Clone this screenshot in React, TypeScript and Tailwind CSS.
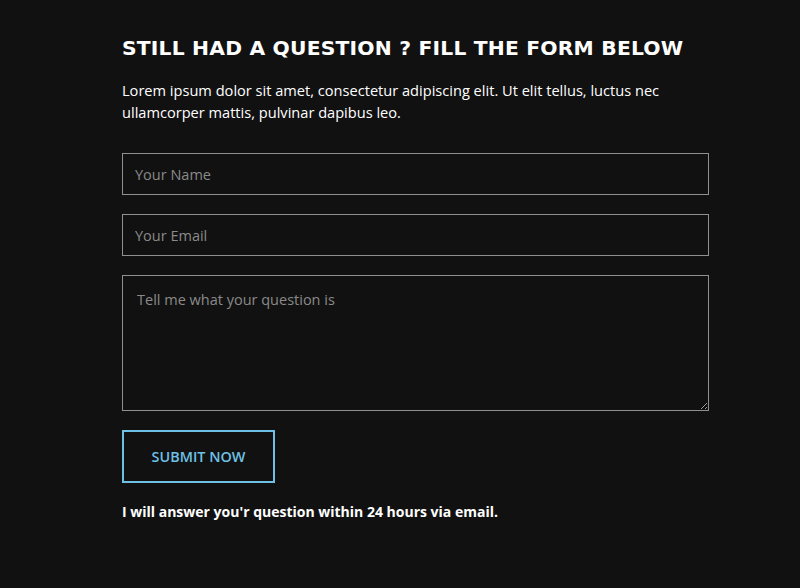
import React from "react";

export default function App() {
  return (
    <div className="w-[800px] h-[588px] bg-[#111111] font-['Open_Sans',sans-serif]">
      <section className="w-[587px] ml-[122px] pt-[34px]">
        <h2 className="text-white font-['DejaVu_Sans',sans-serif] font-bold text-[20.3px] leading-[28px] tracking-[0.2px]">
          STILL HAD A QUESTION ? FILL THE FORM BELOW
        </h2>
        <p className="mt-[17px] text-white text-[14.6px] leading-[22px]">
          Lorem ipsum dolor sit amet, consectetur adipiscing elit. Ut elit tellus, luctus nec ullamcorper mattis, pulvinar dapibus leo.
        </p>
        <form className="mt-[30px] flex flex-col gap-[19px]">
          <input
            type="text"
            placeholder="Your Name"
            className="w-full h-[42px] px-[12px] bg-transparent border border-[#909090] text-[14.5px] text-white placeholder:text-[#8a8a8a] outline-none"
          />
          <input
            type="email"
            placeholder="Your Email"
            className="w-full h-[42px] px-[12px] bg-transparent border border-[#909090] text-[14.5px] text-white placeholder:text-[#8a8a8a] outline-none"
          />
          <textarea
            placeholder="Tell me what your question is"
            className="w-full h-[136px] px-[14px] pt-[13px] bg-transparent border border-[#909090] text-[14.5px] leading-[22px] text-white placeholder:text-[#8a8a8a] outline-none"
          />
          <div>
            <button
              type="button"
              className="w-[153px] h-[53px] border-2 border-[#6ec1e4] text-[#6ec1e4] font-semibold text-[14.4px]"
            >
              SUBMIT NOW
            </button>
          </div>
        </form>
        <p className="mt-[18px] text-white font-bold text-[14px]">
          I will answer you'r question within 24 hours via email.
        </p>
      </section>
    </div>
  );
}
